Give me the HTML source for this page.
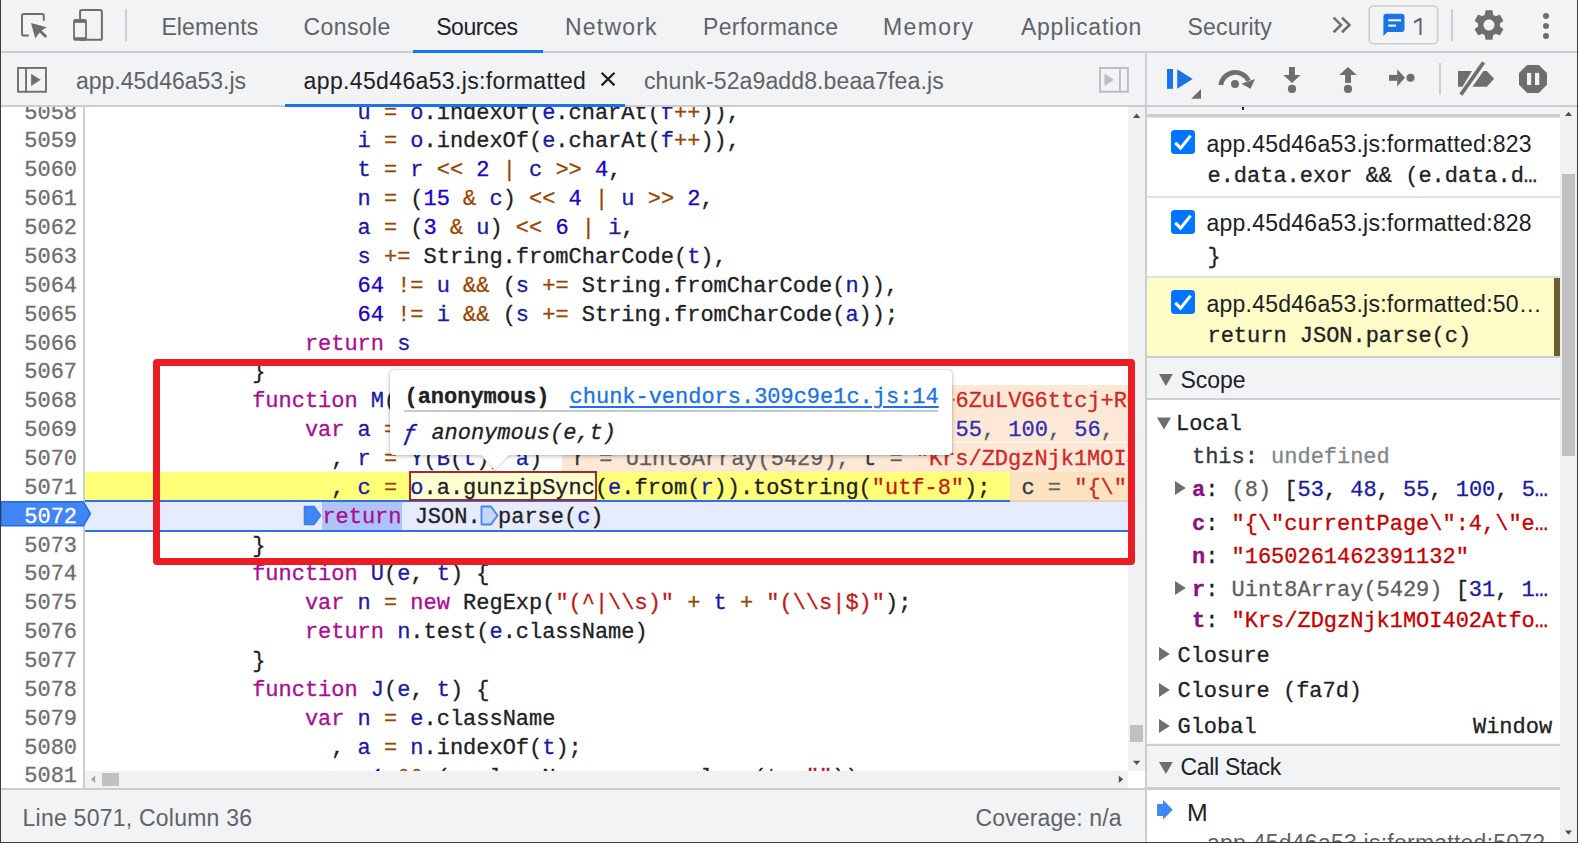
<!DOCTYPE html>
<html><head><meta charset="utf-8"><style>
*{margin:0;padding:0;box-sizing:border-box}
html,body{width:1578px;height:843px;overflow:hidden;background:#f1f3f4}
body{position:relative;font-family:"Liberation Sans",sans-serif;color:#202124}
.abs{position:absolute}
.sans{font-family:"Liberation Sans",sans-serif;font-size:23px;white-space:pre;position:absolute;line-height:28px}
.mono{font-family:"Liberation Mono",monospace;font-size:22px;letter-spacing:-0.02px;white-space:pre}
.k{color:#aa0d91}.v{color:#1a1aa6}.n{color:#1c00cf}.s{color:#c41a16}.o{color:#994500}
#code{position:absolute;left:85px;top:107px;width:1043px;height:664px;overflow:hidden;background:#fff}
#gut{position:absolute;left:1px;top:107px;width:82px;height:681px;overflow:hidden;background:#fff}
.ln{position:absolute;font-family:"Liberation Mono",monospace;font-size:22px;letter-spacing:-0.02px;white-space:pre;line-height:28.86px;height:28.86px;color:#202124}
.gn{position:absolute;left:0;width:76px;text-align:right;font-family:"Liberation Mono",monospace;font-size:22px;letter-spacing:-0.02px;line-height:28.86px;color:#6e6e6e}
.gn.cur{color:#fff}
.hbox{}
.mk1{display:inline-block;width:17.5px;height:20px;vertical-align:-4px}
.mk2{display:inline-block;width:17.5px;height:20px;vertical-align:-4px}
.rhl{}
.hl-y{position:absolute;left:0;width:925px;background:#ffff78}
.hl-b{position:absolute;left:0;width:1043px;background:#e6ebfc;border-top:2px solid #3b78e7;border-bottom:2px solid #3b78e7}
.inl{position:absolute;background:#fde8d6;font-family:"Liberation Mono",monospace;font-size:22px;letter-spacing:-0.02px;white-space:pre;line-height:28.86px;color:#5e5e5e;overflow:hidden}
.inl .nm{color:#303942}.inl .st{color:#d02828}.inl .nu{color:#2e2eb8}

.ln,.gn,.mono,.inl{-webkit-text-stroke:0.3px currentColor}

</style></head><body>
<!-- window borders -->
<div class="abs" style="left:0;top:0;width:1px;height:843px;background:#3c3c3c;z-index:50"></div>
<div class="abs" style="left:1577px;top:0;width:1px;height:843px;background:#3c3c3c;z-index:50"></div>
<div class="abs" style="left:0;top:842px;width:1578px;height:1px;background:#3c3c3c;z-index:50"></div>

<!-- main toolbar -->
<div class="abs" style="left:0;top:51px;width:1578px;height:2px;background:#cacdd1"></div>
<div class="sans" style="left:161.4px;top:13px;color:#5f6368;letter-spacing:0.14px">Elements</div>
<div class="sans" style="left:303.6px;top:13px;color:#5f6368;letter-spacing:0.37px">Console</div>
<div class="sans" style="left:436.2px;top:13px;color:#202124;letter-spacing:-0.43px">Sources</div>
<div class="sans" style="left:565.1px;top:13px;color:#5f6368;letter-spacing:1.17px">Network</div>
<div class="sans" style="left:703px;top:13px;color:#5f6368;letter-spacing:0.34px">Performance</div>
<div class="sans" style="left:882.9px;top:13px;color:#5f6368;letter-spacing:1.4px">Memory</div>
<div class="sans" style="left:1020.9px;top:13px;color:#5f6368;letter-spacing:0.8px">Application</div>
<div class="sans" style="left:1187.6px;top:13px;color:#5f6368;letter-spacing:0.17px">Security</div>
<div class="abs" style="left:413px;top:50px;width:130px;height:3px;background:#1a73e8"></div>

<!-- file tabs toolbar -->
<div class="abs" style="left:0;top:105px;width:1145px;height:2px;background:#cacdd1"></div>
<div class="sans" style="left:76px;top:67px;color:#5f6368">app.45d46a53.js</div>
<div class="sans" style="left:303.6px;top:67px;color:#202124;letter-spacing:0.36px">app.45d46a53.js:formatted</div>
<div class="sans" style="left:644px;top:67px;color:#5f6368;letter-spacing:0.12px">chunk-52a9add8.beaa7fea.js</div>
<div class="abs" style="left:285px;top:104px;width:340px;height:3px;background:#1a73e8"></div>

<!-- right panel -->
<div class="abs" style="left:1145px;top:53px;width:2px;height:789px;background:#cacdd1"></div>
<div class="abs" style="left:1147px;top:105px;width:430px;height:2px;background:#cacdd1"></div>

<!-- gutter -->
<div id="gut">
<div class="gn" style="top:-7.38px">5058</div>
<div class="gn" style="top:21.48px">5059</div>
<div class="gn" style="top:50.34px">5060</div>
<div class="gn" style="top:79.20px">5061</div>
<div class="gn" style="top:108.06px">5062</div>
<div class="gn" style="top:136.92px">5063</div>
<div class="gn" style="top:165.78px">5064</div>
<div class="gn" style="top:194.64px">5065</div>
<div class="gn" style="top:223.50px">5066</div>
<div class="gn" style="top:252.36px">5067</div>
<div class="gn" style="top:281.22px">5068</div>
<div class="gn" style="top:310.08px">5069</div>
<div class="gn" style="top:338.94px">5070</div>
<div class="gn" style="top:367.80px">5071</div>
<div class="gn cur" style="top:396.66px">5072</div>
<div class="gn" style="top:425.52px">5073</div>
<div class="gn" style="top:454.38px">5074</div>
<div class="gn" style="top:483.24px">5075</div>
<div class="gn" style="top:512.10px">5076</div>
<div class="gn" style="top:540.96px">5077</div>
<div class="gn" style="top:569.82px">5078</div>
<div class="gn" style="top:598.68px">5079</div>
<div class="gn" style="top:627.54px">5080</div>
<div class="gn" style="top:656.40px">5081</div>
</div>
<div class="abs" style="left:83px;top:107px;width:2px;height:681px;background:#cacdd1"></div>
<svg class="abs" style="left:0px;top:500px;z-index:5" width="95" height="28" viewBox="0 0 95 28"><path d="M1 1.7 H83.3 L90.4 13.75 L83.3 25.8 H1 Z" fill="#4285f4" stroke="#1a6fe8" stroke-width="1.6" stroke-linejoin="miter"/></svg>
<div class="gn cur" style="left:1px;top:503.66px;z-index:6">5072</div>

<!-- code -->
<div id="code">
<div class="hl-y" style="top:365.00px;height:28px;width:925px"></div>
<div class="abs" style="left:0;top:393.2px;width:1043px;height:1.8px;background:#2f6fe9"></div>
<div class="abs" style="left:0;top:395px;width:1043px;height:27.8px;background:#e6ebfd"></div>
<div class="abs" style="left:0;top:422.8px;width:1043px;height:2px;background:#2f6fe9"></div>
<!-- inline values -->
<div class="inl" style="left:425px;top:278.42px;width:618px;height:28.86px"></div>
<div class="inl" style="left:650px;top:307.28px;width:393px;height:28.2px;padding-left:0"><span style="position:absolute;left:-3.56px;top:2.8px">a = (8) [<span class="nu">53</span>, <span class="nu">48</span>, <span class="nu">55</span>, <span class="nu">100</span>, <span class="nu">56</span>, <span class="nu">52</span></span></div>
<div class="inl" style="left:868px;top:278.42px;width:175px;height:28.86px"><span class="st" style="position:absolute;left:-23.86px;top:2.8px">j+6ZuLVG6ttcj+RGd</span></div>
<div class="inl" style="left:476.5px;top:336.14px;width:566.5px;height:28.86px"><span style="position:absolute;left:11.5px;top:2.8px"><span class="nm">r</span> = Uint8Array(5429), <span class="nm">t</span> = <span class="st">"Krs/ZDgzNjk1MOI402AtfoNk</span></span></div>
<div class="inl" style="left:925px;top:365.00px;width:118px;height:28.86px;background:#fce3c0"><span style="position:absolute;left:11.5px;top:2.8px"><span class="nm">c</span> = <span class="st">"{\"currentPage</span></span></div>
<div class="abs" style="left:925px;top:393.2px;width:118px;height:1.8px;background:#e8cfc0"></div>
<div class="abs" style="left:237.2px;top:395.2px;width:79.6px;height:27.4px;background:#aec3f7"></div>
<div class="abs" style="left:323.6px;top:363.6px;width:188.2px;height:30.8px;border:2px solid #a52a2a;background:#ffffd2"></div>
<div class="ln" style="top:-7.38px;left:272.60px"><span class="v">u</span> <span class="o">=</span> <span class="v">o</span>.indexOf(<span class="v">e</span>.charAt(<span class="v">f</span><span class="o">++</span>)),</div>
<div class="ln" style="top:21.48px;left:272.60px"><span class="v">i</span> <span class="o">=</span> <span class="v">o</span>.indexOf(<span class="v">e</span>.charAt(<span class="v">f</span><span class="o">++</span>)),</div>
<div class="ln" style="top:50.34px;left:272.60px"><span class="v">t</span> <span class="o">=</span> <span class="v">r</span> <span class="o">&lt;&lt;</span> <span class="n">2</span> <span class="o">|</span> <span class="v">c</span> <span class="o">&gt;&gt;</span> <span class="n">4</span>,</div>
<div class="ln" style="top:79.20px;left:272.60px"><span class="v">n</span> <span class="o">=</span> (<span class="n">15</span> <span class="o">&amp;</span> <span class="v">c</span>) <span class="o">&lt;&lt;</span> <span class="n">4</span> <span class="o">|</span> <span class="v">u</span> <span class="o">&gt;&gt;</span> <span class="n">2</span>,</div>
<div class="ln" style="top:108.06px;left:272.60px"><span class="v">a</span> <span class="o">=</span> (<span class="n">3</span> <span class="o">&amp;</span> <span class="v">u</span>) <span class="o">&lt;&lt;</span> <span class="n">6</span> <span class="o">|</span> <span class="v">i</span>,</div>
<div class="ln" style="top:136.92px;left:272.60px"><span class="v">s</span> <span class="o">+=</span> String.fromCharCode(<span class="v">t</span>),</div>
<div class="ln" style="top:165.78px;left:272.60px"><span class="n">64</span> <span class="o">!=</span> <span class="v">u</span> <span class="o">&amp;&amp;</span> (<span class="v">s</span> <span class="o">+=</span> String.fromCharCode(<span class="v">n</span>)),</div>
<div class="ln" style="top:194.64px;left:272.60px"><span class="n">64</span> <span class="o">!=</span> <span class="v">i</span> <span class="o">&amp;&amp;</span> (<span class="v">s</span> <span class="o">+=</span> String.fromCharCode(<span class="v">a</span>));</div>
<div class="ln" style="top:223.50px;left:219.88px"><span class="k">return</span> <span class="v">s</span></div>
<div class="ln" style="top:252.36px;left:167.16px">}</div>
<div class="ln" style="top:281.22px;left:167.16px"><span class="k">function</span> <span class="v">M</span>(<span class="v">e</span>, <span class="v">t</span>) {</div>
<div class="ln" style="top:310.08px;left:219.88px"><span class="k">var</span> <span class="v">a</span> <span class="o">=</span> <span class="v">V</span>(<span class="v">n</span>, <span class="v">t</span>)</div>
<div class="ln" style="top:338.94px;left:246.24px">, <span class="v">r</span> <span class="o">=</span> <span class="v">Y</span>(<span class="v">B</span>(<span class="v">t</span>), <span class="v">a</span>)</div>
<div class="ln" style="top:367.80px;left:246.24px">, <span class="v">c</span> <span class="o">=</span> <span class="hbox"><span class="v">o</span>.a.gunzipSync</span>(<span class="v">e</span>.from(<span class="v">r</span>)).toString(<span class="s">&quot;utf-8&quot;</span>);</div>
<div class="ln" style="top:396.66px;left:219.88px"><span class="mk1"></span><span class="rhl"><span class="k">return</span></span> JSON.<span class="mk2"></span>parse(<span class="v">c</span>)</div>
<div class="ln" style="top:425.52px;left:167.16px">}</div>
<div class="ln" style="top:454.38px;left:167.16px"><span class="k">function</span> <span class="v">U</span>(<span class="v">e</span>, <span class="v">t</span>) {</div>
<div class="ln" style="top:483.24px;left:219.88px"><span class="k">var</span> <span class="v">n</span> <span class="o">=</span> <span class="k">new</span> RegExp(<span class="s">&quot;(^|\\s)&quot;</span> <span class="o">+</span> <span class="v">t</span> <span class="o">+</span> <span class="s">&quot;(\\s|$)&quot;</span>);</div>
<div class="ln" style="top:512.10px;left:219.88px"><span class="k">return</span> <span class="v">n</span>.test(<span class="v">e</span>.className)</div>
<div class="ln" style="top:540.96px;left:167.16px">}</div>
<div class="ln" style="top:569.82px;left:167.16px"><span class="k">function</span> <span class="v">J</span>(<span class="v">e</span>, <span class="v">t</span>) {</div>
<div class="ln" style="top:598.68px;left:219.88px"><span class="k">var</span> <span class="v">n</span> <span class="o">=</span> <span class="v">e</span>.className</div>
<div class="ln" style="top:627.54px;left:246.24px">, <span class="v">a</span> <span class="o">=</span> <span class="v">n</span>.indexOf(<span class="v">t</span>);</div>
<div class="ln" style="top:658.00px;left:219.88px"><span class="v">a</span> <span class="o">&gt;</span> <span class="n">-1</span> <span class="o">&amp;&amp;</span> (<span class="v">e</span>.className <span class="o">=</span> <span class="v">n</span>.replace(<span class="v">t</span>, <span class="s">&quot;&quot;</span>))</div>
<!-- markers line 5072 -->
<svg class="abs" style="left:218px;top:398px" width="20" height="21" viewBox="0 0 20 21"><path d="M1.5 1.5 H11 L17.5 10.5 L11 19.5 H1.5 Z" fill="#4285f4" stroke="#3b7ded" stroke-width="1.6" stroke-linejoin="round"/></svg>
<svg class="abs" style="left:395px;top:398px" width="20" height="21" viewBox="0 0 20 21"><path d="M1.5 1.5 H11 L17.5 10.5 L11 19.5 H1.5 Z" fill="#c4d6fb" stroke="#4285f4" stroke-width="1.8" stroke-linejoin="round"/></svg>
<!-- vertical scrollbar -->

</div>
<!-- code vscroll -->
<div class="abs" style="left:1128px;top:107px;width:17px;height:664px;background:#f1f1f1"></div>
<svg class="abs" style="left:1128px;top:106px" width="17" height="17"><path d="M5 12 L12.3 12 L8.65 7.6 Z" fill="#505050"/></svg>
<div class="abs" style="left:1130px;top:725px;width:13px;height:16.5px;background:#c1c1c1"></div>
<svg class="abs" style="left:1128px;top:754px" width="17" height="17"><path d="M5 6.7 L12.3 6.7 L8.65 11 Z" fill="#505050"/></svg>
<!-- code hscroll -->
<div class="abs" style="left:85px;top:771px;width:1043px;height:17px;background:#f1f1f1"></div>
<div class="abs" style="left:1128px;top:771px;width:17px;height:17px;background:#fff"></div>
<svg class="abs" style="left:85px;top:771px" width="17" height="17"><path d="M10.2 4.7 L10.2 12 L5.8 8.35 Z" fill="#a3a3a3"/></svg>
<div class="abs" style="left:102px;top:772.8px;width:17px;height:13px;background:#c1c1c1"></div>
<svg class="abs" style="left:1111px;top:771px" width="17" height="17"><path d="M7.8 4.7 L7.8 12 L12.2 8.35 Z" fill="#505050"/></svg>
<!-- red annotation box -->
<div class="abs" style="left:152.6px;top:358.8px;width:982.3px;height:205.9px;border:7.1px solid #ec1c24;border-radius:4px;z-index:20"></div>
<!-- popover -->
<div class="abs" style="left:390px;top:369.6px;width:562px;height:85.6px;background:#fff;border-radius:4px;box-shadow:0 0 1px rgba(0,0,0,.3),0 1px 4px rgba(0,0,0,.3);z-index:21"></div>
<svg class="abs" style="left:476px;top:450px;z-index:22" width="38" height="24" viewBox="0 0 38 24"><path d="M4 4.5 L19 20.6 L34 4.5" fill="#fff" stroke="rgba(0,0,0,.12)" stroke-width="1.2"/><rect x="0" y="0" width="38" height="5.2" fill="#fff"/></svg>
<div class="abs" style="left:390px;top:369.6px;width:562px;height:86px;z-index:23">
  <div class="mono" style="position:absolute;left:14.5px;top:14px;font-weight:bold;color:#202124;line-height:28px">(anonymous)</div>
  <div class="mono" style="position:absolute;left:179.6px;top:14px;color:#1a73e8;line-height:28px;text-decoration:underline;text-underline-offset:3px">chunk-vendors.309c9e1c.js:14</div>
  <div style="position:absolute;left:14px;top:40.3px;width:534px;height:2px;background:#c6c9ce"></div>
  <div class="mono" style="position:absolute;left:13px;top:50px;color:#202124;line-height:28px;font-style:italic"><span style="color:#1a1aa6;font-family:'Liberation Mono',monospace;font-size:24px">&#402;</span></div>
  <div class="mono" style="position:absolute;left:41.4px;top:50px;color:#202124;line-height:28px;font-style:italic">anonymous(e,t)</div>
</div>

<!-- ===== top toolbar icons ===== -->
<svg class="abs" style="left:0;top:0" width="140" height="52" viewBox="0 0 140 52">
  <path d="M28.85 35.6 H23.8 Q22 35.6 22 33.8 V15.9 Q22 14.1 23.8 14.1 H42 Q43.8 14.1 43.8 15.9 V20.8" fill="none" stroke="#6e6e6e" stroke-width="2"/>
  <path d="M31 23 L46.6 27.3 L41.6 30.4 L47.2 36 L45.2 38 L39.6 32.4 L35.3 38.4 Z" fill="#6e6e6e"/>
  <rect x="80.1" y="10.1" width="21.8" height="29.7" rx="1.6" fill="none" stroke="#6e6e6e" stroke-width="2"/>
  <rect x="73.1" y="19" width="13.8" height="21.8" rx="2" fill="#6e6e6e"/>
  <rect x="74.9" y="22.9" width="10.2" height="14.3" fill="#f1f3f4"/>
  <rect x="125" y="9" width="2" height="32" fill="#cacdd1"/>
</svg>
<svg class="abs" style="left:1320px;top:0" width="258" height="52" viewBox="1320 0 258 52">
  <path d="M1333.6 17.6 L1341 24.9 L1333.6 32.2 M1342 17.6 L1349.4 24.9 L1342 32.2" fill="none" stroke="#6e6e6e" stroke-width="2.6"/>
  <rect x="1369.2" y="6" width="68.4" height="37.7" rx="4" fill="none" stroke="#cbcdd1" stroke-width="1.6"/>
  <path d="M1386.4 13.8 H1401.5 Q1404.5 13.8 1404.5 16.8 V28.9 Q1404.5 31.9 1401.5 31.9 H1387.4 L1383.4 35.9 V16.8 Q1383.4 13.8 1386.4 13.8 Z" fill="#1a73e8"/>
  <rect x="1388.2" y="19.3" width="12.9" height="2" fill="#fff"/>
  <rect x="1388.2" y="24.6" width="7.8" height="2" fill="#fff"/>
  <rect x="1451" y="9" width="2" height="32" fill="#cacdd1"/>
  <g transform="translate(1470.7 6.7) scale(1.525)"><path d="M19.14 12.94c.04-.3.06-.61.06-.94 0-.32-.02-.64-.07-.94l2.03-1.58c.18-.14.23-.41.12-.61l-1.92-3.32c-.12-.22-.37-.29-.59-.22l-2.39.96c-.5-.38-1.03-.7-1.62-.94l-.36-2.54c-.04-.24-.24-.41-.48-.41h-3.84c-.24 0-.43.17-.47.41l-.36 2.54c-.59.24-1.13.57-1.62.94l-2.39-.96c-.22-.08-.47 0-.59.22L2.74 8.87c-.12.21-.08.47.12.61l2.03 1.58c-.05.3-.09.63-.09.94s.02.64.07.94l-2.03 1.58c-.18.14-.23.41-.12.61l1.92 3.320c.12.22.37.29.59.22l2.39-.96c.5.38 1.03.7 1.62.94l.36 2.54c.05.24.24.41.48.41h3.84c.24 0 .44-.17.47-.41l.36-2.54c.59-.24 1.13-.56 1.62-.94l2.39.96c.22.08.47 0 .59-.22l1.92-3.32c.12-.22.07-.47-.12-.61l-2.01-1.58zM12 15.6c-1.98 0-3.6-1.62-3.6-3.6s1.62-3.6 3.6-3.6 3.6 1.62 3.6 3.6-1.62 3.6-3.6 3.6z" fill="#6e6e6e"/></g>
  <circle cx="1546" cy="16" r="3" fill="#6e6e6e"/><circle cx="1546" cy="26" r="3" fill="#6e6e6e"/><circle cx="1546" cy="36" r="3" fill="#6e6e6e"/>
</svg>
<svg class="abs" style="left:1410px;top:14px" width="16" height="24" viewBox="1410 14 16 24"><path d="M1413.8 21.3 L1419.6 18 H1421.5 V35 H1419.5 V20.6 L1414.3 23.4 Z" fill="#5f6368"/></svg>

<!-- ===== file tabs toolbar icons ===== -->
<svg class="abs" style="left:0;top:53px" width="60" height="52" viewBox="0 53 60 52">
  <rect x="18.05" y="67.95" width="27.9" height="23.8" fill="none" stroke="#6e6e6e" stroke-width="1.9"/>
  <rect x="25.1" y="67" width="1.9" height="25.7" fill="#6e6e6e"/>
  <path d="M31.1 73.8 L40.6 79.8 L31.1 85.9 Z" fill="#6e6e6e"/>
</svg>
<svg class="abs" style="left:590px;top:62px" width="40" height="36" viewBox="590 62 40 36">
  <path d="M601.6 72.7 L614.5 85.4 M614.5 72.7 L601.6 85.4" stroke="#202124" stroke-width="2.2"/>
</svg>
<svg class="abs" style="left:1090px;top:60px" width="50" height="40" viewBox="1090 60 50 40">
  <rect x="1100" y="67.95" width="27.9" height="23.8" fill="none" stroke="#b9bcc0" stroke-width="1.9"/>
  <rect x="1119" y="67" width="1.9" height="25.7" fill="#b9bcc0"/>
  <path d="M1104.5 73.8 L1114 79.8 L1104.5 85.9 Z" fill="#b9bcc0"/>
</svg>

<!-- ===== debugger toolbar ===== -->
<svg class="abs" style="left:1147px;top:53px" width="430" height="52" viewBox="1147 53 430 52">
  <rect x="1167" y="69" width="6" height="19.8" fill="#1a73e8"/>
  <path d="M1177.2 69.2 L1192.6 78.9 L1177.2 88.7 Z" fill="#1a73e8"/>
  <path d="M1191.2 98.8 L1201 89 L1201 98.8 Z" fill="#6e6e6e"/>
  <path d="M1220.8 85 A14.6 14.6 0 0 1 1248.5 80.8" fill="none" stroke="#6e6e6e" stroke-width="4.8"/>
  <path d="M1241.4 83.8 L1255 78.9 L1250.5 88.7 Z" fill="#6e6e6e"/>
  <circle cx="1235" cy="84" r="4" fill="#6e6e6e"/>
  <rect x="1289" y="67" width="5.9" height="8.5" fill="#6e6e6e"/>
  <path d="M1283.3 75.1 L1300.6 75.1 L1292 82.9 Z" fill="#6e6e6e"/>
  <circle cx="1292" cy="88.9" r="4.1" fill="#6e6e6e"/>
  <path d="M1348 67 L1356.7 75.1 L1339.2 75.1 Z" fill="#6e6e6e"/>
  <rect x="1345.1" y="75" width="5.9" height="7.9" fill="#6e6e6e"/>
  <circle cx="1348" cy="88.9" r="4.1" fill="#6e6e6e"/>
  <rect x="1389" y="74.9" width="8.5" height="5.9" fill="#6e6e6e"/>
  <path d="M1397.2 69.2 L1405 77.8 L1397.2 86.5 Z" fill="#6e6e6e"/>
  <circle cx="1410.5" cy="77.8" r="4" fill="#6e6e6e"/>
  <rect x="1439" y="63" width="2" height="31.7" fill="#cacdd1"/>
  <path d="M1458 71.1 L1472 71.1 L1462.5 86.7 L1458 86.7 Z" fill="#6e6e6e"/>
  <path d="M1483.5 71.1 L1486.8 71.1 L1494.1 78.65 L1486.8 86.7 L1472.4 86.7 Z" fill="#6e6e6e"/>
  <path d="M1483.6 62.4 L1460.9 94.6" stroke="#6e6e6e" stroke-width="3.7"/>
  <path d="M1527.2 64.9 L1538.8 64.9 L1547 73.1 L1547 84.7 L1538.8 92.9 L1527.2 92.9 L1519 84.7 L1519 73.1 Z" fill="#6e6e6e"/>
  <rect x="1527" y="72.9" width="4.2" height="12.1" fill="#f1f3f4"/>
  <rect x="1535" y="72.9" width="4.2" height="12.1" fill="#f1f3f4"/>
</svg>

<!-- ===== right panel content ===== -->
<div class="abs" style="left:1147px;top:114px;width:413px;height:2.5px;background:#cacdd1"></div>
<div class="abs" style="left:1147px;top:116.5px;width:413px;height:1.3px;background:#e3e4e6"></div>
<div class="abs" style="left:1242px;top:107px;width:2px;height:3px;background:#202124"></div>
<div class="abs" style="left:1147px;top:117.8px;width:413px;height:240.2px;background:#fff"></div>
<div class="abs" style="left:1147px;top:196px;width:413px;height:2px;background:#e0e1e3"></div>
<div class="abs" style="left:1147px;top:276px;width:413px;height:1.6px;background:#e0e1e3"></div>
<div class="abs" style="left:1147px;top:277.6px;width:413px;height:78.4px;background:#fffcc8"></div>
<div class="abs" style="left:1554.3px;top:277.6px;width:5.7px;height:78.4px;background:#6b5f2f"></div>
<div class="abs" style="left:1147px;top:356px;width:413px;height:2px;background:#cacdd1"></div>
<div class="abs" style="left:1147px;top:398px;width:413px;height:2px;background:#cacdd1"></div>
<div class="abs" style="left:1147px;top:400px;width:413px;height:343px;background:#fff"></div>
<div class="abs" style="left:1147px;top:743.5px;width:413px;height:2.5px;background:#cacdd1"></div>
<div class="abs" style="left:1147px;top:787px;width:413px;height:3px;background:#cacdd1"></div>
<div class="abs" style="left:1147px;top:790px;width:413px;height:52px;background:#fff"></div>

<svg class="abs" style="left:1147px;top:118px" width="60" height="240" viewBox="1147 118 60 240">
  <g id="cb"><rect x="1171" y="130" width="24" height="24" rx="3.5" fill="#0075ff"/><path d="M1175.3 142.9 L1180.6 148.2 L1190.6 135.6" fill="none" stroke="#fff" stroke-width="3.1"/></g>
  <use href="#cb" transform="translate(0 80)"/>
  <use href="#cb" transform="translate(0 160)"/>
</svg>
<div class="sans" style="left:1206.5px;top:130px;letter-spacing:0.24px">app.45d46a53.js:formatted:823</div>
<div class="mono abs" style="left:1207.5px;top:162.5px;line-height:28.86px;color:#202124">e.data.exor &amp;&amp; (e.data.d&#8230;</div>
<div class="sans" style="left:1206.5px;top:208.5px;letter-spacing:0.24px">app.45d46a53.js:formatted:828</div>
<div class="mono abs" style="left:1207.5px;top:243.7px;line-height:28.86px;color:#202124">}</div>
<div class="sans" style="left:1206.5px;top:289.7px;letter-spacing:0.24px">app.45d46a53.js:formatted:50&#8230;</div>
<div class="mono abs" style="left:1207.5px;top:323.3px;line-height:28.86px;color:#202124">return JSON.parse(c)</div>

<!-- scope header -->
<svg class="abs" style="left:1147px;top:358px" width="40" height="484" viewBox="1147 358 40 484">
  <path d="M1159 374 L1172.8 374 L1165.9 386 Z" fill="#6e6e6e"/>
  <path d="M1159 762 L1172.8 762 L1165.9 774 Z" fill="#6e6e6e"/>
  <path d="M1157 417.5 L1171 417.5 L1164 429.5 Z" fill="#6e6e6e"/>
  <path d="M1175 481 L1185.8 488 L1175 495 Z" fill="#6e6e6e"/>
  <path d="M1175 581 L1185.8 588 L1175 595 Z" fill="#6e6e6e"/>
  <path d="M1159 647 L1169.8 654 L1159 661 Z" fill="#6e6e6e"/>
  <path d="M1159 683 L1169.8 690 L1159 697 Z" fill="#6e6e6e"/>
  <path d="M1159 719 L1169.8 726 L1159 733 Z" fill="#6e6e6e"/>
  <path d="M1157.1 804.1 H1163.1 V800.1 L1172.8 809.8 L1163.1 819.6 V815.9 H1157.1 Z" fill="#4285f4"/>
</svg>
<div class="sans" style="left:1180.4px;top:366px">Scope</div>
<div class="mono abs" style="left:1176px;top:410.9px;line-height:28.86px;color:#202124">Local</div>
<div class="mono abs" style="left:1192px;top:443.7px;line-height:28.86px;color:#303942">this: <span style="color:#80868b">undefined</span></div>
<div class="mono abs" style="left:1192px;top:476.5px;line-height:28.86px;color:#5e5e5e"><b style="color:#881280">a</b><span style="color:#202124">:</span> (8) <span style="color:#202124">[</span><span style="color:#1a1aa6">53</span><span style="color:#202124">, </span><span style="color:#1a1aa6">48</span><span style="color:#202124">, </span><span style="color:#1a1aa6">55</span><span style="color:#202124">, </span><span style="color:#1a1aa6">100</span><span style="color:#202124">, </span><span style="color:#1a1aa6">5&#8230;</span></div>
<div class="mono abs" style="left:1192px;top:510.7px;line-height:28.86px;color:#c80000"><b style="color:#881280">c</b><span style="color:#202124">:</span> "{\"currentPage\":4,\"e&#8230;</div>
<div class="mono abs" style="left:1192px;top:543.7px;line-height:28.86px;color:#c80000"><b style="color:#881280">n</b><span style="color:#202124">:</span> "1650261462391132"</div>
<div class="mono abs" style="left:1192px;top:576.5px;line-height:28.86px;color:#5e5e5e"><b style="color:#881280">r</b><span style="color:#202124">:</span> Uint8Array(5429) <span style="color:#202124">[</span><span style="color:#1a1aa6">31</span><span style="color:#202124">, </span><span style="color:#1a1aa6">1&#8230;</span></div>
<div class="mono abs" style="left:1192px;top:607.7px;line-height:28.86px;color:#c80000"><b style="color:#881280">t</b><span style="color:#202124">:</span> "Krs/ZDgzNjk1MOI402Atfo&#8230;</div>
<div class="mono abs" style="left:1177.5px;top:642.7px;line-height:28.86px;color:#202124">Closure</div>
<div class="mono abs" style="left:1177.5px;top:678.2px;line-height:28.86px;color:#202124">Closure (fa7d)</div>
<div class="mono abs" style="left:1177.5px;top:713.7px;line-height:28.86px;color:#202124">Global</div>
<div class="mono abs" style="left:1473px;top:713.7px;line-height:28.86px;color:#202124">Window</div>
<div class="sans" style="left:1180.4px;top:753px;letter-spacing:-0.3px">Call Stack</div>
<div class="sans" style="left:1187.4px;top:798.5px;transform:scaleX(1.08);transform-origin:0 0">M</div>
<div class="sans" style="left:1207px;top:828.5px;color:#5f6368;letter-spacing:0.24px">app.45d46a53.js:formatted:5072</div>

<!-- right scrollbar -->
<div class="abs" style="left:1560px;top:107px;width:17px;height:735px;background:#f1f1f1"></div>
<svg class="abs" style="left:1560px;top:107px" width="17" height="17" viewBox="1560 107 17 17"><path d="M1565 116 L1572.1 116 L1568.5 111.8 Z" fill="#505050"/></svg>
<div class="abs" style="left:1562px;top:173.8px;width:12.8px;height:282.2px;background:#c1c1c1"></div>
<svg class="abs" style="left:1560px;top:824px" width="17" height="17" viewBox="1560 824 17 17"><path d="M1565 830.5 L1572.1 830.5 L1568.5 834.7 Z" fill="#505050"/></svg>

<!-- status bar -->
<div class="abs" style="left:1px;top:788px;width:1144px;height:2px;background:#cacdd1"></div>
<div class="sans" style="left:22.6px;top:804px;color:#5f6368;letter-spacing:0.23px">Line 5071, Column 36</div>
<div class="sans" style="left:975.6px;top:804px;color:#5f6368;letter-spacing:0.12px">Coverage: n/a</div>

</body></html>
